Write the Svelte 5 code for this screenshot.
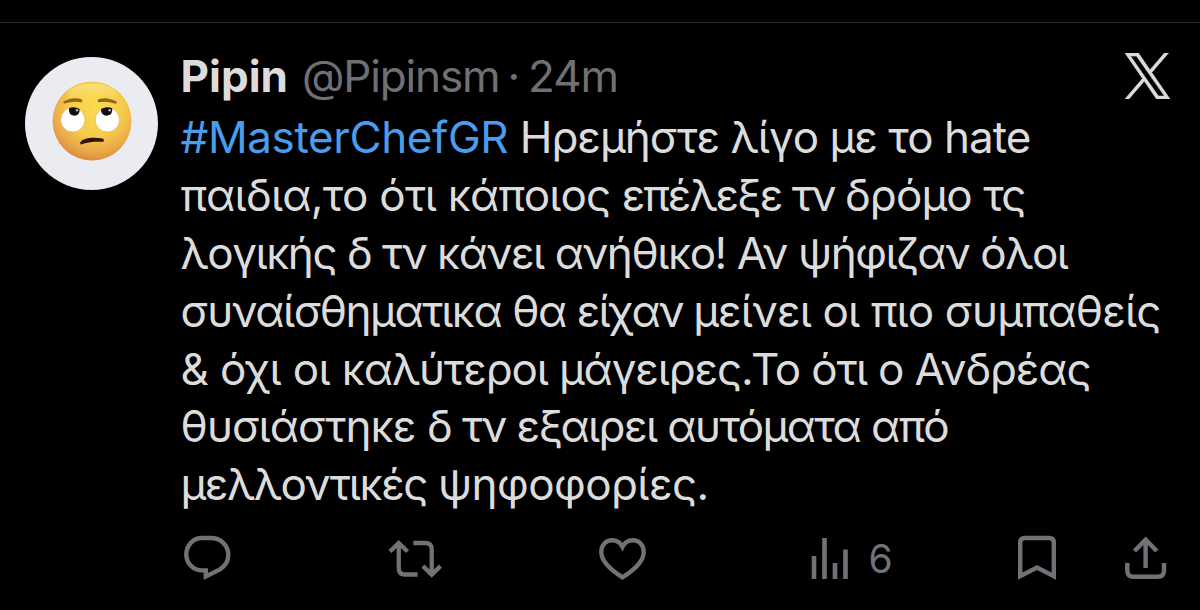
<script>
  // Each line is a list of runs: text and its tracking in pixels.
  const lines = [
    [{ text: '#MasterChefGR', gap: -0.4, tag: true }, { text: ' Ηρεμήστε λίγο με το hate', gap: -0.98 }],
    [{ text: 'παιδια,το ότι ', gap: -0.7 }, { text: 'κάποιος ', gap: -0.88 }, { text: 'επέλεξε τν ', gap: -2.03 }, { text: 'δρόμο τς', gap: -0.88 }],
    [{ text: 'λογικής δ τν κάνει ανήθικο! Αν ψήφιζαν όλοι', gap: -1.45 }],
    [{ text: 'συναίσθηματικα θα ', gap: -1.46 }, { text: 'είχαν ', gap: -1.97 }, { text: 'μείνει οι πιο συμπαθείς', gap: -0.87 }],
    [{ text: '& όχι οι ', gap: -0.59 }, { text: 'καλύτεροι μάγειρες.Το ότι ο Ανδρέας', gap: -1.14 }],
    [{ text: 'θυσιάστηκε ', gap: -0.92 }, { text: 'δ τν εξαιρει αυτόματα από', gap: -1.57 }],
    [{ text: 'μελλοντικές ', gap: -1.44 }, { text: 'ψηφοφορίες.', gap: -0.56 }]
  ];
</script>

<article class="post">
  <div class="avatar">
    <svg viewBox="0 0 80 80" width="80" height="80" aria-hidden="true">
      <defs>
        <radialGradient id="skin" cx="0.55" cy="0.34" r="0.7">
          <stop offset="0" stop-color="#fadb50" />
          <stop offset="0.5" stop-color="#f5cb4c" />
          <stop offset="0.8" stop-color="#e9a748" />
          <stop offset="1" stop-color="#d98339" />
        </radialGradient>
        <linearGradient id="shine" x1="0" y1="0" x2="0" y2="1">
          <stop offset="0" stop-color="#fff0a0" stop-opacity="0.6" />
          <stop offset="1" stop-color="#fbe052" stop-opacity="0" />
        </linearGradient>
      </defs>
      <circle cx="40" cy="40" r="39.5" fill="url(#skin)" />
      <ellipse cx="40" cy="13" rx="25" ry="10" fill="url(#shine)" />
      <path d="M11.3 20.8Q20 15 30 18.4Q31 20.8 29 21.2Q20 19.8 12.5 22.6Q10.6 22.6 11.3 20.8ZM46 18.4Q55 15 64.7 20.8Q65.3 22.7 63.5 22.7Q55 19.8 47 21.2Q45 20.8 46 18.4Z" fill="#93651d" />
      <circle cx="20.8" cy="38.8" r="12.2" fill="#fff" stroke="#dda63e" stroke-width="0.6" />
      <circle cx="55.4" cy="38.8" r="12.2" fill="#fff" stroke="#dda63e" stroke-width="0.6" />
      <path d="M17 27.2Q22 25.2 27.6 28Q28 34.4 22.2 34.7Q16.3 34.2 17 27.2ZM49 28Q54.5 25.2 60.2 27.2Q61 34.2 54.8 34.7Q48.8 34.4 49 28Z" fill="#140d0b" />
      <circle cx="25" cy="29.3" r="1.3" fill="#b9b9bd" />
      <circle cx="57.7" cy="29.3" r="1.3" fill="#b9b9bd" />
      <path d="M28.2 62.8C28.2 57.4 40 55.8 50.5 57.4Q52.6 58.2 51.5 60.7C44 60.6 36 60.6 30.2 63Q28.5 64 28.2 62.8Z" fill="#351209" />
    </svg>
  </div>

  <div class="content">
    <header>
      <strong>Pipin</strong>
      <span class="handle">@Pipinsm</span>
      <span class="dot">·</span>
      <span class="time">24m</span>
      <svg class="logo" viewBox="0 0 24 24" width="45" height="46" preserveAspectRatio="none" aria-label="X">
        <path fill="#dcdcdc" stroke="#dcdcdc" stroke-width=".35" d="M14.258 10.152L23.176 0h-2.113l-7.747 8.813L7.133 0H0l9.352 13.328L0 23.973h2.113l8.176-9.309 6.531 9.309h7.133zm-2.895 3.293l-.949-1.328L2.875 1.56h3.246l6.086 8.523.945 1.328 7.91 11.078h-3.246z" />
      </svg>
    </header>

    <div class="body">
      {#each lines as runs}
        <p>{#each runs as run}<span class:tag={run.tag} style:letter-spacing="{run.gap}px">{run.text}</span>{/each}</p>
      {/each}
    </div>

    <footer>
      <svg class="reply" viewBox="0 0 54 56" width="54" height="56"><path d="M20.8 8H30C39.5 8 47.3 15.3 47.3 24.7C47.3 31 44.5 36 38.5 39.6L24.8 46.5V40.4H21.5C12.5 40.6 5.3 33.5 5.3 24.5C5.3 15 12.5 8 20.8 8Z" /></svg>
      <svg class="repost" viewBox="0 0 60 56" width="60" height="56"><path d="M4.7 21.5L13.7 13L22.7 21.5M13.7 14V38Q13.7 44.5 20.2 44.5H33M28.7 13H41Q47.5 13 47.5 19.5V43.5M38.5 36.2L47.5 44.7L56.5 36.2" transform="translate(.4) scale(.975 1)" /></svg>
      <svg class="like" viewBox="0 0 54 56" width="54" height="56"><path d="M26.5 47.3C14 39.5 5.3 31.5 5.3 22C5.3 14.5 10.5 10.2 16 10.2C20.8 10.2 24.5 12.8 26.5 16.8C28.5 12.8 32.2 10.2 37 10.2C42.5 10.2 47.7 14.5 47.7 22C47.7 31.5 39 39.5 26.5 47.3Z" /></svg>
      <div class="views">
        <svg viewBox="0 0 42 56" width="42" height="56"><path d="M5 26V49M15.5 8V49M26 33V49M36.5 19.5V49" stroke-width="4.6" /></svg>
        <span>6</span>
      </div>
      <svg class="save" viewBox="0 0 46 56" width="46" height="56"><path d="M5.2 46.2V12.5Q5.2 8 9.7 8H34.3Q38.8 8 38.8 12.5V46.2L22 37.5Z" /></svg>
      <svg class="share" viewBox="0 0 48 56" width="48" height="56"><path d="M12.5 21L23.6 9.7L34.8 21M23.6 10.5V38M5.3 33V40.5Q5.3 46.8 11.6 46.8H35.7Q42 46.8 42 40.5V33" /></svg>
    </footer>
  </div>
</article>

<style>
  :global(body) {
    background: #000;
  }

  .post {
    box-sizing: border-box;
    width: 1200px;
    height: 610px;
    display: flex;
    background: #000;
    border-top: 22px solid #000;
    box-shadow: inset 0 1px #2b2c2e;
    padding: 25px 0 0 25px;
    overflow: hidden;
    font-family: Inter, 'Liberation Sans', sans-serif;
    font-size: 44px;
    line-height: 57.8px;
    color: #dcdcdc;
  }

  .avatar {
    flex: none;
    display: flex;
    align-items: center;
    justify-content: center;
    box-sizing: border-box;
    width: 133px;
    height: 133px;
    margin: 10px 22.5px 0 0;
    padding-bottom: 5px;
    border-radius: 50%;
    background: #ebecf1;
  }

  .content {
    flex: 1;
    min-width: 0;
    padding-top: 1.4px;
  }

  header {
    display: flex;
    height: 61px;
    white-space: nowrap;
    color: #6f7074;
  }

  strong {
    color: #dcdcdc;
    font-weight: 700;
    margin-right: 14px;
  }

  .handle {
    letter-spacing: -1.15px;
  }

  .dot {
    margin: 0 8px 0 8px;
  }

  .time {
    letter-spacing: -1.1px;
  }

  .logo {
    margin: 4.6px 30.5px 0 auto;
  }

  p {
    margin: 0;
    white-space: pre;
  }

  .tag {
    color: #4a9cec;
  }

  footer {
    display: flex;
    margin-top: 16px;
    color: #717277;
  }

  footer svg {
    flex: none;
    fill: none;
    stroke: currentColor;
    stroke-width: 4.4;
  }

  .repost {
    margin-left: 150px;
  }

  .like {
    margin-left: 151px;
  }

  .views {
    display: flex;
    margin-left: 159px;
    width: 90px;
  }

  .views span {
    font-size: 39px;
    margin-left: 18px;
  }

  .save {
    margin-left: 116.5px;
  }

  .share {
    margin-left: 61px;
  }
</style>
